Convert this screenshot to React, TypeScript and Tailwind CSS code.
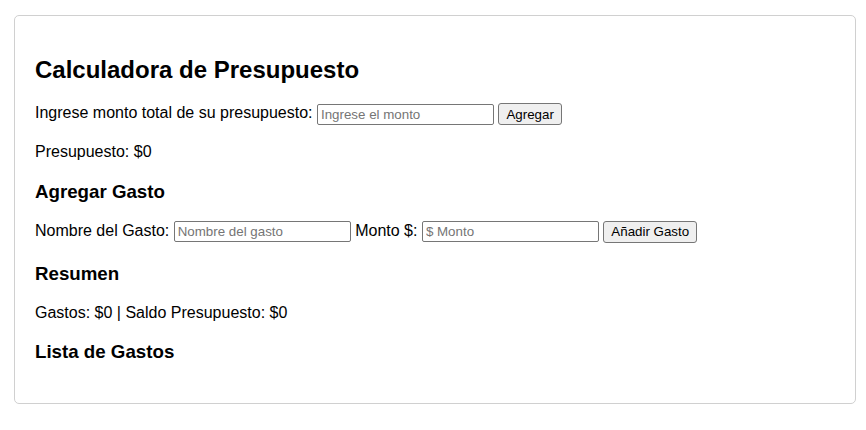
import React, { useState } from "react";

type Gasto = { nombre: string; monto: number };

export default function App() {
  const [presupuesto, setPresupuesto] = useState(0);
  const [montoTotal, setMontoTotal] = useState("");
  const [nombre, setNombre] = useState("");
  const [monto, setMonto] = useState("");
  const [gastos, setGastos] = useState<Gasto[]>([]);

  const totalGastos = gastos.reduce((acc, g) => acc + g.monto, 0);

  const inputCls =
    "w-[177px] h-[21px] border border-[#767676] rounded-[2px] px-[3px] text-[13.33px] text-black placeholder:text-[#757575] bg-white outline-none";
  const btnCls =
    "h-[22px] border border-[#767676] rounded-[3px] bg-[#efefef] px-[7px] text-[13.33px] text-black";

  return (
    <div className="min-h-[430px] bg-white text-black leading-[1.15] font-['Liberation_Sans',Arial,sans-serif] pt-[15px]">
      <div className="ml-[14px] w-[842px] border border-[#d0d0d0] rounded-[5px] px-[20px] pt-[20px] pb-[22px]">
        <h2 className="text-[24px] font-bold my-[19.92px]">Calculadora de Presupuesto</h2>
        <p className="text-[16px] my-4 h-[24px]">
          Ingrese monto total de su presupuesto:{" "}
          <input
            className={inputCls}
            placeholder="Ingrese el monto"
            value={montoTotal}
            onChange={(e) => setMontoTotal(e.target.value)}
          />{" "}
          <button
            className={btnCls}
            onClick={() => setPresupuesto(Number(montoTotal) || 0)}
          >
            Agregar
          </button>
        </p>
        <p className="text-[16px] my-4">Presupuesto: ${presupuesto}</p>

        <h3 className="text-[18.72px] font-bold my-[18.72px]">Agregar Gasto</h3>
        <p className="text-[16px] my-4 h-[24px]">
          Nombre del Gasto:{" "}
          <input
            className={inputCls}
            placeholder="Nombre del gasto"
            value={nombre}
            onChange={(e) => setNombre(e.target.value)}
          />{" "}
          Monto $:{" "}
          <input
            className={inputCls}
            placeholder="$ Monto"
            value={monto}
            onChange={(e) => setMonto(e.target.value)}
          />{" "}
          <button
            className={btnCls}
            onClick={() => {
              if (!nombre || !monto) return;
              setGastos([...gastos, { nombre, monto: Number(monto) || 0 }]);
              setNombre("");
              setMonto("");
            }}
          >
            Añadir Gasto
          </button>
        </p>

        <h3 className="text-[18.72px] font-bold my-[18.72px]">Resumen</h3>
        <p className="text-[16px] my-4">
          Gastos: ${totalGastos} | Saldo Presupuesto: ${presupuesto - totalGastos}
        </p>

        <h3 className="text-[18.72px] font-bold my-[18.72px]">Lista de Gastos</h3>
        {gastos.length > 0 && (
          <ul className="list-disc pl-10 text-[16px]">
            {gastos.map((g, i) => (
              <li key={i}>
                {g.nombre}: ${g.monto}
              </li>
            ))}
          </ul>
        )}
      </div>
    </div>
  );
}
